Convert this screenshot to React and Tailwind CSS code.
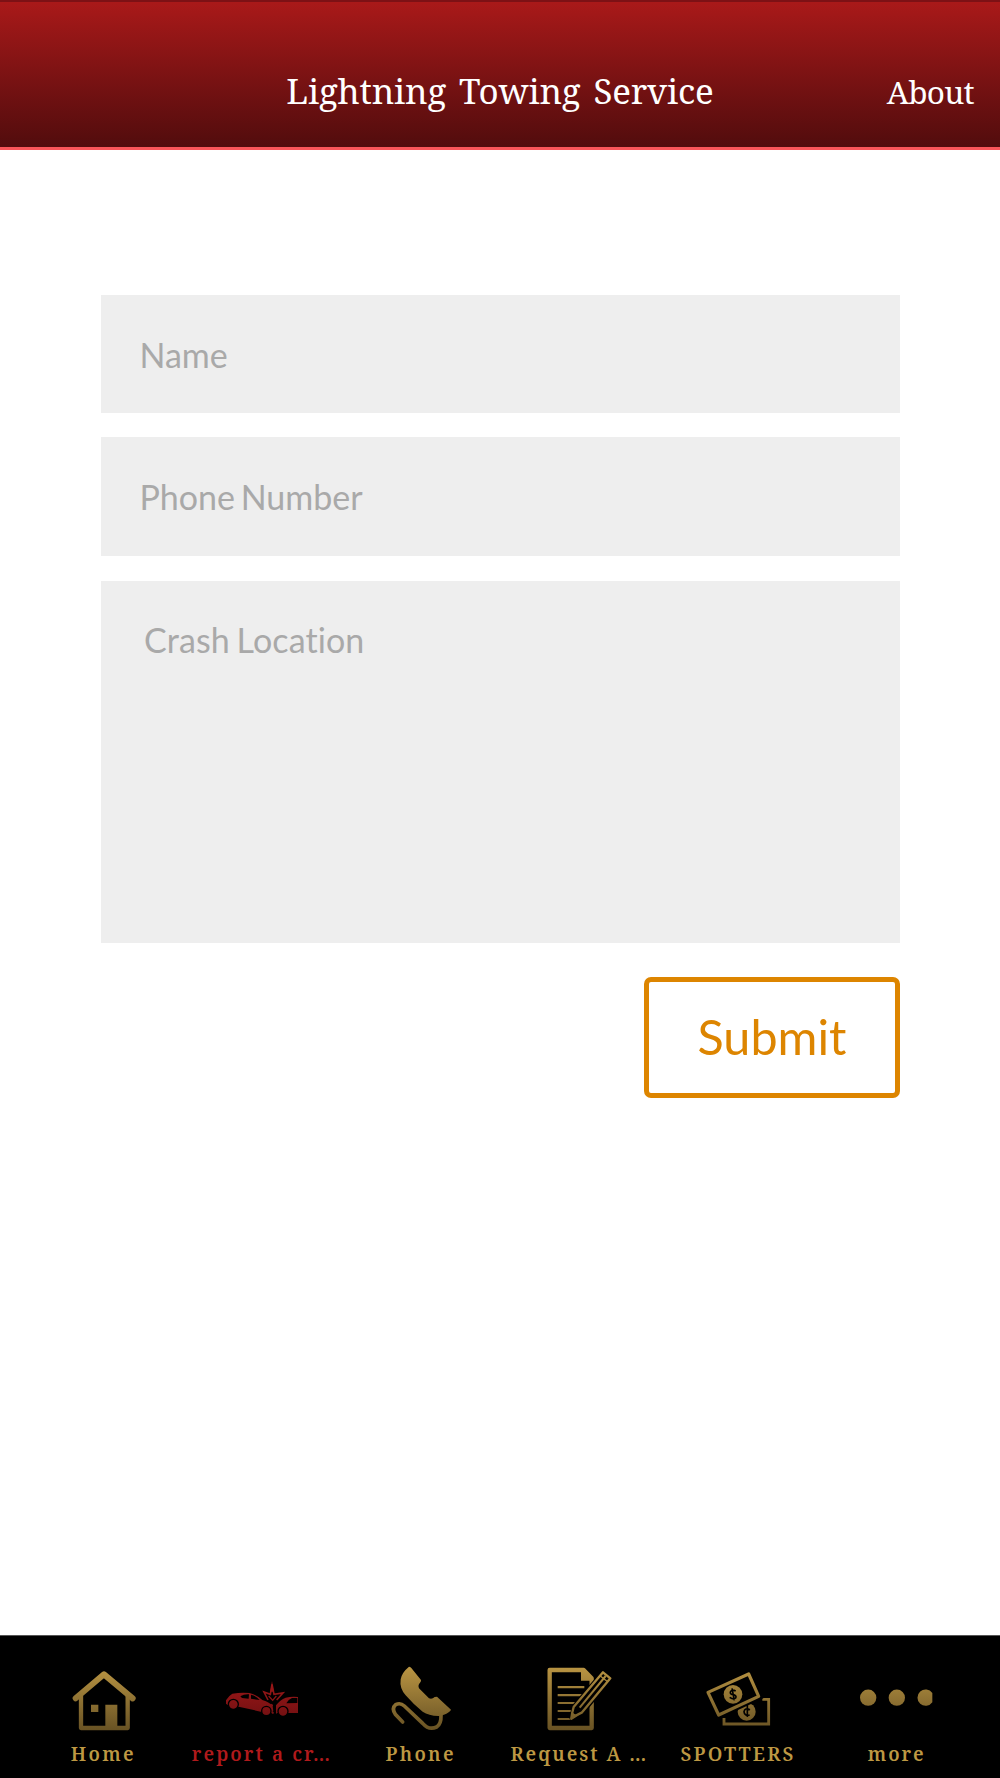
import { useState } from "react";

const GOLD = "url(#gold)";
const RED = "url(#red)";

function HomeIcon() {
  return (
    <svg viewBox="21 111 216 216" className="size-[72px]">
      <g fill="none" stroke={GOLD} strokeLinejoin="round" strokeLinecap="round">
        <path d="M47 220 L132 148 L218 220" strokeWidth="18" />
        <path d="M63 212 V309 H203 V212" strokeWidth="13" />
      </g>
      <path d="M93 239 h22 v22 h-22 z M136 239 h36 v68 h-36 z" fill={GOLD} />
    </svg>
  );
}

function CrashIcon() {
  return (
    <svg viewBox="138 111 216 216" className="size-[72px]">
      <path
        d="M138 236 L138 226 Q147 211 157 206 Q185 201 208 204 Q228 208 247 225 Q270 233 278 243 L280 259 L276 262 L242 260 L176 245 L143 240 Z"
        fill={RED}
      />
      <path d="M181 214 Q192 207 207 208 L206 221 L186 219 Z M213 209 Q227 212 239 225 L213 221 Z" fill="#000" />
      <path
        d="M288 266 V241 Q300 225 317 218 Q335 214 354 216 V264 H326 L292 264 Z"
        fill={RED}
      />
      <path d="M319 235 Q325 223 336 219 H352 V234 Z" fill="#000" />
      <g fill={RED} stroke="#000" strokeWidth="4">
        <circle cx="160" cy="238" r="15" />
        <circle cx="259" cy="258" r="14" />
        <circle cx="309" cy="259" r="15" />
      </g>
      <path
        d="M264 225 L252 201 L271 208 L276 178 L282 208 L309 204 L290 225"
        fill="none"
        stroke={RED}
        strokeWidth="5"
      />
      <path d="M276 168 L281 200 H271 Z" fill={RED} />
      <path d="M266 213 L278 226 L289 213" fill="none" stroke={RED} strokeWidth="4" />
      <path d="M273 236 l6 3 v5 l-6 -3 z M274 261 h7 v5 h-5 z" fill={RED} />
    </svg>
  );
}

function PhoneIcon() {
  return (
    <svg viewBox="45 111 216 216" className="size-[72px]">
      <path
        d="M117 125 Q120 125 124 129 L153 165 Q154 169 150 173 Q143 180 147 190 L177 220 Q186 224 194 216 L201 215 L243 254 Q242 258 236 262 Q223 272 205 273 Q176 272 158 260 Q130 238 107 211 Q88 190 92 163 Q95 143 117 125 Z"
        fill={GOLD}
      />
      <path
        d="M98 291 L76 268 Q64 250 77 239 Q91 232 103 243 L158 295 Q177 317 200 306 Q214 297 213 270"
        fill="none"
        stroke={GOLD}
        strokeWidth="11"
        strokeLinecap="round"
      />
    </svg>
  );
}

function RequestIcon() {
  return (
    <svg viewBox="129 111 216 216" className="size-[72px]">
      <path
        d="M149 135 H251 L275 160 V309 H149 Z"
        fill="none"
        stroke={GOLD}
        strokeWidth="13"
        strokeLinejoin="round"
      />
      <path d="M243 132 L277 161 V167 H243 Z" fill={GOLD} />
      <path
        d="M173 186.5 H253 M173 210.5 H253 M173 234 H232 M173 258 H219 M173 282 H218"
        stroke={GOLD}
        strokeWidth="6.5"
      />
      <path
        d="M215 280 L221 246 L308 143 L331 161 L247 263 Z"
        fill="#000"
        stroke="#000"
        strokeWidth="13"
        strokeLinejoin="round"
      />
      <path
        d="M309 142 L331 160 L245 263 Q234 268 214 281 Q216 263 221 246 Z"
        fill="#000"
        stroke={GOLD}
        strokeWidth="7"
        strokeLinejoin="round"
      />
      <path d="M317 153 L239 248" stroke={GOLD} strokeWidth="6" />
      <path d="M300 152 L324 171" stroke={GOLD} strokeWidth="4" />
      <path d="M211 284 L216 257 Q221 272 240 268 Z" fill={GOLD} />
    </svg>
  );
}

function MoneyIcon() {
  return (
    <svg viewBox="96 111 216 216" className="size-[72px]">
      <path d="M277 223 H296 V297 H162 V279" fill="none" stroke={GOLD} strokeWidth="8.5" />
      <circle cx="230" cy="260" r="27" fill={GOLD} />
      <path
        d="M240 254 Q224 247 222 260 Q223 274 239 270 M232 240 V276"
        fill="none"
        stroke="#000"
        strokeWidth="5"
      />
      <path d="M114 202 L236 147 L266 214 L146 270 Z" fill="#000" stroke="#000" strokeWidth="22" />
      <path
        d="M114 202 L236 147 L266 214 L146 270 Z"
        fill="#000"
        stroke={GOLD}
        strokeWidth="9.5"
        strokeLinejoin="round"
      />
      <circle cx="189" cy="208" r="28" fill={GOLD} />
      <path
        d="M197 198 Q185 192 181 201 Q180 208 190 209 Q201 212 197 219 Q191 225 179 217 M186 190 L193 226"
        fill="none"
        stroke="#000"
        strokeWidth="5"
      />
    </svg>
  );
}

function MoreIcon() {
  return (
    <svg viewBox="63 111 216 216" className="size-[72px] overflow-visible">
      <circle cx="84.5" cy="218" r="24.5" fill={GOLD} />
      <circle cx="170.5" cy="218" r="24.5" fill={GOLD} />
      {/* last dot is cut at the right edge */}
      <path d="M277 204 A24.5 24.5 0 1 0 277 232 Z" fill={GOLD} />
    </svg>
  );
}

const tabs = [
  { id: "home", label: "Home", icon: HomeIcon, spacing: "tracking-[2.3px]" },
  { id: "report", label: "report a cr…", icon: CrashIcon, spacing: "tracking-[2.1px]" },
  { id: "phone", label: "Phone", icon: PhoneIcon, spacing: "tracking-[2.3px]" },
  { id: "request", label: "Request A …", icon: RequestIcon, spacing: "tracking-[2px]" },
  { id: "spotters", label: "SPOTTERS", icon: MoneyIcon, spacing: "tracking-[2.2px]" },
  { id: "more", label: "more", icon: MoreIcon, spacing: "tracking-[2px]" },
];

export default function App() {
  const [active, setActive] = useState("report");

  return (
    <div className="flex h-[1778px] w-[1000px] flex-col bg-white">
      <svg className="absolute size-0">
        <defs>
          <linearGradient id="gold" gradientUnits="userSpaceOnUse" x1="0" y1="111" x2="0" y2="327">
            <stop offset="0" stopColor="#c09a45" />
            <stop offset="1" stopColor="#634e22" />
          </linearGradient>
          <linearGradient id="red" gradientUnits="userSpaceOnUse" x1="0" y1="111" x2="0" y2="327">
            <stop offset="0" stopColor="#b31b1b" />
            <stop offset="1" stopColor="#5f0d0f" />
          </linearGradient>
        </defs>
      </svg>

      <header className="grid h-[150px] grid-cols-[1fr_auto_1fr] items-baseline border-t-2 border-b-3 border-t-[#7d1115] border-b-[#f9565a] bg-linear-to-b from-[#a91919] to-[#520c0d] px-[26px] pt-[67px] font-['Noto_Serif',serif] text-white">
        <span />
        <h1 className="text-[35px] leading-[44px] tracking-[-0.2px] whitespace-nowrap [word-spacing:4px]">
          Lightning Towing Service
        </h1>
        <a href="#about" className="text-right text-[31.5px] leading-[44px] tracking-[-0.7px]">About</a>
      </header>

      <form
        onSubmit={(e) => e.preventDefault()}
        className="flex flex-1 flex-col pt-[145px] pr-[100px] pl-[101px] font-['Lato',sans-serif] text-[34px] [font-variant-ligatures:none]"
      >
        <input
          type="text"
          placeholder="Name"
          className="h-[118px] bg-[#eee] px-[38.5px] pt-px placeholder:text-[#a9a9a9]"
        />
        <input
          type="tel"
          placeholder="Phone Number"
          className="mt-6 h-[119px] bg-[#eee] px-[38.5px] [word-spacing:-3px] placeholder:text-[#a9a9a9]"
        />
        <textarea
          placeholder="Crash Location"
          className="mt-[25px] h-[362px] resize-none bg-[#eee] px-[43px] pt-[38px] leading-[42px] tracking-[0.1px] [word-spacing:-2px] placeholder:text-[#a9a9a9]"
        />
        <button
          type="submit"
          className="mt-[34px] h-[121px] w-[256px] self-end rounded-[7px] border-5 border-[#dd8500] pb-[3px] text-[48.5px] text-[#dd8500]"
        >
          Submit
        </button>
      </form>

      <nav className="flex h-[143px] border-t border-[#555] bg-black px-6 pt-[26px] font-['Noto_Serif',serif]">
        {tabs.map(({ id, label, icon: Icon, spacing }) => (
          <button
            key={id}
            onClick={() => setActive(id)}
            className={`flex flex-1 flex-col items-center ${active === id ? "text-[#b01a1c]" : "text-[#bd9843]"}`}
          >
            <Icon />
            <span className={`mt-2 text-[19px] leading-[24px] font-semibold whitespace-nowrap ${spacing}`}>{label}</span>
          </button>
        ))}
      </nav>
    </div>
  );
}
